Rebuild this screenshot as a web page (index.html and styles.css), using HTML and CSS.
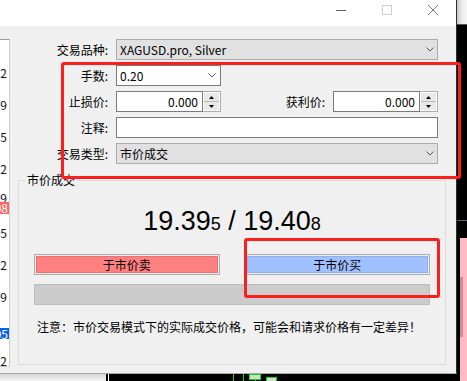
FILE: index.html
```html
<!DOCTYPE html>
<html lang="zh-CN">
<head>
<meta charset="utf-8">
<title>订单</title>
<link rel="stylesheet" href="styles.css">
</head>
<body>
<div class="desktop">
  <div class="bg-tr"></div>
  <div class="bg-hline"></div>
  <div class="bg-pink"></div>
  <div class="bg-pink-dark"></div>
  <div class="bg-bl"></div>
  <div class="bg-vline"></div>
  <svg class="candles" width="50" height="9" viewBox="0 0 50 9">
    <path d="M0.5 0V9M10.5 0V9M22.5 6V9" stroke="#00e000" fill="none"/>
    <rect x="16.5" y="1.5" width="11" height="5" fill="#d8d8d8" stroke="#00e000"/>
    <rect x="33.5" y="4.5" width="10" height="6" fill="#d8d8d8" stroke="#00e000"/>
  </svg>

  <div class="window">
    <div class="titlebar">
      <div class="tb-btn"><svg width="10" height="10"><path d="M0 5.5H10" stroke="#666"/></svg></div>
      <div class="tb-btn"><svg width="10" height="10"><rect x="0.5" y="0.5" width="9" height="9" fill="none" stroke="#cfcfcf"/></svg></div>
      <div class="tb-btn"><svg width="10" height="10"><path d="M0 0L10 10M10 0L0 10" stroke="#7a7a7a"/></svg></div>
    </div>
    <div class="client">
      <div class="tick">
        <div class="tick-labels">
          <div class="tl">19.422</div>
          <div class="tl">19.419</div>
          <div class="tl">19.415</div>
          <div class="tl">19.412</div>
          <div class="tl tl-part">19.409</div>
          <div class="tl">19.405</div>
          <div class="tl">19.402</div>
          <div class="tl">19.399</div>
          <div class="tl"></div>
          <div class="tl">19.392</div>
        </div>
        <div class="marker ask">19.408</div>
        <div class="marker bid">19.395</div>
      </div>
      <div class="main">
        <div class="form">
          <label class="lbl">交易品种:</label>
          <div class="combo grey"><span>XAGUSD.pro, Silver</span><svg class="chev" width="8" height="5"><path d="M0.5 0.5L4 4L7.5 0.5" stroke="#5a5a5a" fill="none"/></svg></div>

          <label class="lbl">手数:</label>
          <div class="frow"><div class="combo white"><span>0.20</span><svg class="chev" width="8" height="5"><path d="M0.5 0.5L4 4L7.5 0.5" stroke="#5a5a5a" fill="none"/></svg></div></div>

          <label class="lbl">止损价:</label>
          <div class="frow">
            <div class="spin">
              <div class="spin-text">0.000</div>
              <div class="spin-btns">
                <div class="sb"><svg width="5" height="3"><path d="M0 3L2.5 0L5 3Z" fill="#000"/></svg></div>
                <div class="sb down"><svg width="5" height="3"><path d="M0 0L5 0L2.5 3Z" fill="#000"/></svg></div>
              </div>
            </div>
            <span class="spacer"></span>
            <label class="lbl">获利价:</label>
            <div class="spin">
              <div class="spin-text">0.000</div>
              <div class="spin-btns">
                <div class="sb"><svg width="5" height="3"><path d="M0 3L2.5 0L5 3Z" fill="#000"/></svg></div>
                <div class="sb down"><svg width="5" height="3"><path d="M0 0L5 0L2.5 3Z" fill="#000"/></svg></div>
              </div>
            </div>
          </div>

          <label class="lbl">注释:</label>
          <div class="input"></div>

          <label class="lbl">交易类型:</label>
          <div class="combo grey"><span>市价成交</span><svg class="chev" width="8" height="5"><path d="M0.5 0.5L4 4L7.5 0.5" stroke="#5a5a5a" fill="none"/></svg></div>
        </div>

        <fieldset class="group">
          <legend>市价成交</legend>
          <div class="price">19.39<small>5</small> / 19.40<small>8</small></div>
          <div class="buttons">
            <div class="btn sell"><span>于市价卖</span></div>
            <div class="btn buy"><span>于市价买</span></div>
          </div>
          <div class="bar"></div>
          <p class="note">注意：市价交易模式下的实际成交价格，可能会和请求价格有一定差异！</p>
        </fieldset>
      </div>
    </div>
  </div>

  <div class="mark mark1"></div>
  <div class="mark mark2"></div>
</div>
</body>
</html>
```

FILE: styles.css
```css
* { box-sizing: border-box; margin: 0; padding: 0; }
html, body { width: 467px; height: 381px; overflow: hidden; }
body {
  background: #000;
  font-family: "Noto Sans CJK SC", "Noto Sans", sans-serif;
  font-size: 12px;
  color: #000;
}
.desktop { position: relative; width: 467px; height: 381px; overflow: hidden; background: #000; }

/* background windows */
.bg-tr { position: absolute; left: 457px; top: 0; width: 10px; height: 25px;
  background: linear-gradient(to right, #c8c8c8, #ececec 50%, #f8f8f8);
  border-bottom: 1px solid #555; }
.bg-hline { position: absolute; left: 457px; top: 220px; width: 10px; height: 1px; background: #5a6272; }
.bg-pink { position: absolute; left: 460px; top: 238px; width: 7px; height: 143px; background: #ffbac4; }
.bg-pink-dark { position: absolute; left: 460px; top: 277px; width: 3px; height: 60px; background: #cf8f99; }
.bg-bl { position: absolute; left: 0; top: 374px; width: 106px; height: 7px;
  background: linear-gradient(to bottom, #d6d6d6, #f4f4f4); }
.bg-vline { position: absolute; left: 108px; top: 374px; width: 1px; height: 7px; background: #fff; }
.candles { position: absolute; left: 233px; top: 373px; }

/* dialog window */
.window {
  position: absolute; left: 0; top: 0;
  width: 457px; height: 374px;
  background: #f0f0f0;
  border-right: 1px solid #2e2e2e;
  border-bottom: 1px solid #a8a8a8;
  display: flex; flex-direction: column;
}
.titlebar { height: 26px; flex: none; background: #fff; display: flex; justify-content: flex-end; }
.tb-btn { width: 46px; height: 26px; display: flex; justify-content: center; padding-top: 5px; }
.tb-btn svg { display: block; }

.client { flex: 1; display: flex; }

.tick {
  flex: none; width: 10px; height: 328px; margin-top: 13px;
  background: #fff;
  border-top: 1px solid #9a9a9a;
  border-right: 1px solid #cdcdcd;
  border-bottom: 1px solid #cdcdcd;
  position: relative; overflow: hidden;
}
.tick-labels { padding-top: 17px; }
.tl {
  height: 32px; line-height: 32px;
  display: flex; justify-content: flex-end;
  white-space: nowrap; overflow: hidden;
  padding-right: 2px; color: #101020;
}
.tl-part { line-height: 26px; }
.marker {
  position: absolute; left: 0; width: 9px; height: 12px; line-height: 12px;
  display: flex; justify-content: flex-end; white-space: nowrap; overflow: hidden;
  padding-right: 1px; color: #fff;
}
.marker.ask { top: 162px; background: #ff6464; }
.marker.bid { top: 288px; height: 11px; line-height: 11px; background: #0a62ee; }

.main { flex: 1; padding-top: 13px; }

.form {
  display: grid;
  grid-template-columns: 98px 322px;
  column-gap: 8px; row-gap: 5px;
  grid-auto-rows: 21px;
  align-items: center;
}
.lbl { text-align: right; line-height: 21px; white-space: nowrap; }
.frow { display: flex; align-items: center; height: 21px; }
.frow .lbl { margin-right: 8px; }
.spacer { flex: 1; }

.combo {
  height: 21px; display: flex; align-items: center; justify-content: space-between;
  padding: 0 3px 0 3px; white-space: nowrap;
}
.combo.grey { background: #e1e1e1; border: 1px solid #adadad; }
.combo.white { background: #fff; border: 1px solid #7a7a7a; width: 105px; padding-right: 4px; }
.chev { display: block; flex: none; }

.input { height: 21px; background: #fff; border: 1px solid #7a7a7a; }

.spin { width: 105px; height: 21px; display: flex; }
.spin-text {
  flex: 1; background: #fff; border: 1px solid #7a7a7a;
  text-align: right; padding-right: 4px; line-height: 19px;
}
.spin-btns {
  width: 18px; padding: 1px; display: flex; flex-direction: column;
  border: 1px solid #adadad; border-left: 0; background: #fff;
}
.sb { flex: 1; display: flex; align-items: center; justify-content: center; background: #e9e9e9; }
.sb.down { border-top: 1px solid #b8b8b8; }
.sb svg { display: block; }

.group {
  margin: 8px 0 0 8px; width: 428px;
  border: 1px solid #dcdcdc; padding: 0; min-width: 0;
}
.group legend { margin-left: 6px; padding: 0 2px; line-height: 16px; font-size: 12px; }

.price {
  margin-top: 18px;
  font-family: "Liberation Sans", Arial, sans-serif;
  font-size: 27px; line-height: 30px; text-align: center; color: #000;
}
.price small { font-size: 18px; line-height: 1; }

.buttons { display: flex; gap: 25px; padding: 0 15px; margin-top: 18px; }
.btn { flex: 1; height: 21px; border: 1px solid #adadad; background: #ececec; padding: 1px; display: flex; }
.btn span { flex: 1; display: flex; align-items: center; justify-content: center; line-height: 1; }
.sell span { background: #ff8080; border: 1px solid #f07070; }
.buy span { background: #a0c0ff; border: 1px solid #90b0f0; }

.bar { margin: 9px 15px 0; height: 21px; background: #cccccc; border: 1px solid #bcbcbc; }

.note { margin: 13px 0 29px; padding-left: 18px; line-height: 17px; white-space: nowrap; }

/* annotation rectangles drawn over the screenshot */
.mark { position: absolute; border: 3px solid #ff1e1e; border-radius: 3px; }
.mark1 { left: 61px; top: 62px; width: 400px; height: 117px; }
.mark2 { left: 244px; top: 238px; width: 196px; height: 60px; }
```
